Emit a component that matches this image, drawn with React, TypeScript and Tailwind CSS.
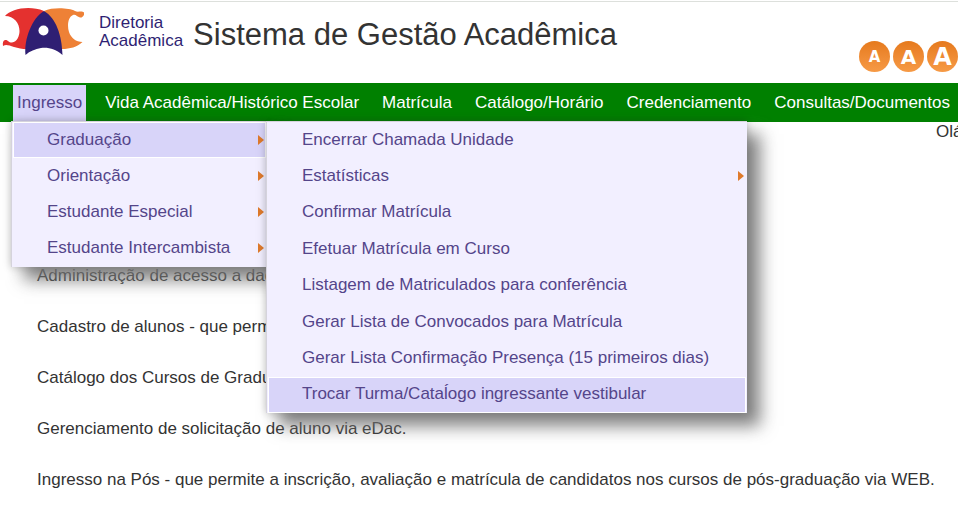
import clsx from 'clsx'

type Item = {
  label: string
  arrow?: boolean
  active?: boolean
}

const sections = ['Vida Acadêmica/Histórico Escolar', 'Matrícula', 'Catálogo/Horário', 'Credenciamento', 'Consultas/Documentos']

const ingresso: Item[] = [
  { label: 'Graduação', arrow: true, active: true },
  { label: 'Orientação', arrow: true },
  { label: 'Estudante Especial', arrow: true },
  { label: 'Estudante Intercambista', arrow: true },
]

const graduacao: Item[] = [
  { label: 'Encerrar Chamada Unidade' },
  { label: 'Estatísticas', arrow: true },
  { label: 'Confirmar Matrícula' },
  { label: 'Efetuar Matrícula em Curso' },
  { label: 'Listagem de Matriculados para conferência' },
  { label: 'Gerar Lista de Convocados para Matrícula' },
  { label: 'Gerar Lista Confirmação Presença (15 primeiros dias)' },
  { label: 'Trocar Turma/Cataĺogo ingressante vestibular', active: true },
]

const paragraphs = [
  'Administração de acesso a dados',
  'Cadastro de alunos - que permite',
  'Catálogo dos Cursos de Graduação',
  'Gerenciamento de solicitação de aluno via eDac.',
  'Ingresso na Pós - que permite a inscrição, avaliação e matrícula de candidatos nos cursos de pós-graduação via WEB.',
]

const fontSizes = [
  { label: 'Fonte pequena', size: 'text-[15px]' },
  { label: 'Fonte média', size: 'text-[20px]' },
  { label: 'Fonte grande', size: 'text-[24px]' },
]

function Logo() {
  return (
    <svg className="shrink-0" width="84" height="56" viewBox="0 2 84 56" aria-hidden="true">
      <path d="M5 16C11 9 29 5 44 11L30 49C24 49.500 19 48.500 14 47C9 45.500 6 44 3 46C2.500 43 3 40.500 5 40C8 39.500 8 42.500 12 42.500C17 42 19.500 36 19.500 31C19.500 23 14 16 5 16Z" fill="#e4312f" />
      <path d="M44 11C53 7 69 8 75 11C78 13 82 10 84.500 13C84 16 82 18 80 17.500C77 17 76 14 73 15C68 17 67 26 69 32C71 38 76 42 82.500 42C77 47 70 49 62 49Z" fill="#ee8136" />
      <path d="M44 11C56 18 62 35 62.500 55C56 49 48 47 41 48C35 49 30 51 25.500 55C24 39 32 18 44 11Z" fill="#2f1f73" />
      <circle cx="43.500" cy="30.500" r="5" fill="#fff" />
    </svg>
  )
}

function Menu({ items, className }: { items: Item[]; className: string }) {
  return (
    <ul
      className={clsx(
        'absolute grid auto-rows-fr border-t border-l border-[#d5d3dc] bg-[#f2efff] px-px text-[#54458a] shadow-[13px_13px_16px_rgba(115,115,115,0.9),0_0_8px_rgba(0,0,0,0.25)]',
        className,
      )}
    >
      {items.map((item) => (
        <li key={item.label} className="flex">
          <a
            href="#"
            className={clsx(
              'flex grow items-center justify-between border pr-px pb-px pl-[33px] whitespace-nowrap',
              item.active ? 'border-white bg-[#d8d4f9]' : 'border-transparent',
            )}
          >
            {item.label}
            {item.arrow && (
              <svg width="6" height="10" viewBox="0 0 6 10" aria-hidden="true">
                <path d="M0 0L6 5L0 10Z" fill="#df7a2c" />
              </svg>
            )}
          </a>
        </li>
      ))}
    </ul>
  )
}

export default function App() {
  return (
    <div className="min-h-screen overflow-hidden bg-white font-['Liberation_Sans',Arial,sans-serif] text-[17px] leading-5 text-[#333]">
      <header className="mt-px flex h-[82px] items-start border-t border-[#dde0dc]">
        <div className="flex">
          <Logo />
          <p className="mt-3 ml-[15px] leading-[18px] text-[#2f1f73]">
            Diretoria
            <br />
            Acadêmica
          </p>
        </div>
        <h1 className="mt-[15px] ml-[10px] text-[31px] leading-9">Sistema de Gestão Acadêmica</h1>
        <div className="mt-[39px] ml-auto flex gap-[3px]">
          {fontSizes.map((f) => (
            <button
              key={f.label}
              aria-label={f.label}
              className={clsx(
                "flex size-[31px] items-center justify-center rounded-full bg-linear-to-b from-[#e67a1c] to-[#f69a45] font-['DejaVu_Sans',sans-serif] font-bold text-white",
                f.size,
              )}
            >
              A
            </button>
          ))}
        </div>
      </header>

      <nav className="relative z-10 bg-[#008000] px-[13px]">
        <ul className="flex h-[39px] gap-[15px] pt-0.5 text-white">
          <li className="relative">
            <a href="#" className="flex h-9 items-center bg-[#d8d4f9] px-1 text-[#54458a]">Ingresso</a>
            <Menu items={ingresso} className="top-9 -left-0.5 h-[146px] w-[256px]" />
            <Menu items={graduacao} className="top-9 left-[253px] h-[292px] w-[481px]" />
          </li>
          {sections.map((s) => (
            <li key={s}>
              <a href="#" className="flex h-9 items-center px-1 whitespace-nowrap">{s}</a>
            </li>
          ))}
        </ul>
      </nav>

      <main>
        <p className="ml-auto w-[22px] whitespace-nowrap">Olá</p>
        <div className="mt-[124px] flex flex-col gap-[31px] pl-[37px]">
          {paragraphs.map((p) => (
            <p key={p}>{p}</p>
          ))}
        </div>
      </main>
    </div>
  )
}
